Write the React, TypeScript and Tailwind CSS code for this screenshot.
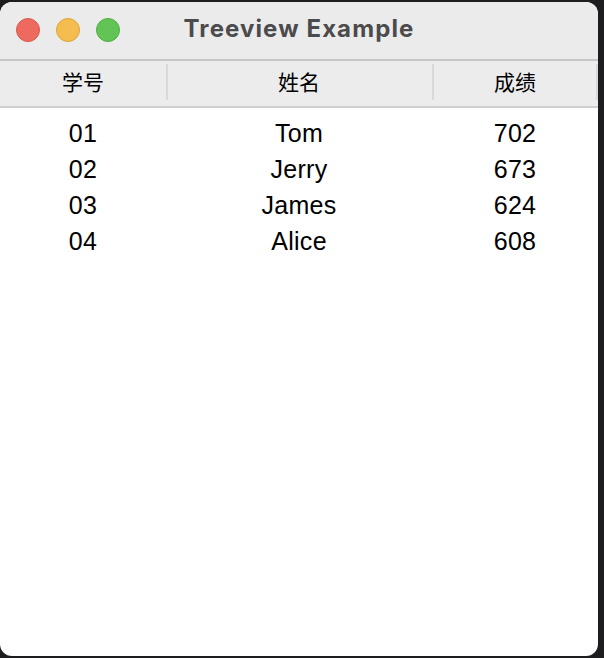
const rows = [
  { id: "01", name: "Tom", score: 702 },
  { id: "02", name: "Jerry", score: 673 },
  { id: "03", name: "James", score: 624 },
  { id: "04", name: "Alice", score: 608 },
];

const cjk = "font-['Liberation_Sans','Noto_Sans_CJK_SC',sans-serif]";

export default function App() {
  return (
    <div className="w-[604px] h-[658px] bg-[#1d1d1f] pt-[2px]">
      <div className="w-[598px] h-[654px] rounded-[12px] overflow-hidden bg-white flex flex-col">
        <TitleBar />
        <Header />
        <div className="pt-[7px]">
          {rows.map((row) => (
            <div
              key={row.id}
              className={`grid grid-cols-[166px_266px_166px] h-9 items-center text-[25px] text-black tracking-[0.3px] ${cjk}`}
            >
              <span className="text-center">{row.id}</span>
              <span className="text-center">{row.name}</span>
              <span className="text-center">{row.score}</span>
            </div>
          ))}
        </div>
      </div>
    </div>
  );
}

function TitleBar() {
  return (
    <div className="relative h-[59px] shrink-0 bg-[#ebebeb] border-b-2 border-[#c6c6c6] flex items-center justify-center pb-[3px]">
      <div className="absolute left-4 top-4 flex gap-4">
        <span className="w-6 h-6 rounded-full bg-[#ee6a5f] border border-[#d65a4f]" />
        <span className="w-6 h-6 rounded-full bg-[#f5bd4f] border border-[#dca43c]" />
        <span className="w-6 h-6 rounded-full bg-[#61c454] border border-[#4fae44]" />
      </div>
      <h1 className="text-[24px] font-bold tracking-[1.1px] text-[#4b4b4d] font-['Inter',sans-serif]">
        Treeview Example
      </h1>
    </div>
  );
}

function Header() {
  const cols = ["学号", "姓名", "成绩"];
  return (
    <div className="grid grid-cols-[166px_266px_166px] h-[47px] shrink-0 bg-[#ececec] border-b-2 border-[#cfcfcf] items-center">
      {cols.map((c, i) => (
        <div key={c} className="relative h-full flex items-center justify-center pb-[1px]">
          {i > 0 && <span className="absolute left-0 top-[3px] h-9 w-[2px] bg-[#d9d9d9]" />}
          <span className={`text-[21px] text-black ${cjk}`}>{c}</span>
          {i === 2 && <span className="absolute right-0 top-[3px] h-9 w-[2px] bg-[#d9d9d9]" />}
        </div>
      ))}
    </div>
  );
}
